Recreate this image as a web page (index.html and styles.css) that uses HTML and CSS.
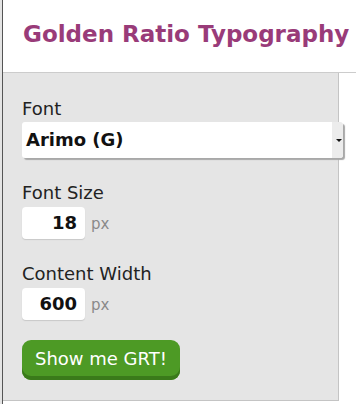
FILE: index.html
```html
<!DOCTYPE html>
<html lang="en">
<head>
    <meta charset="UTF-8">
    <title>Golden Ratio Typography</title>
    <link rel="stylesheet" href="styles.css">
</head>
<body>

    <div class="page">
        <div class="page-edge"></div>

        <!-- Fenêtre du popup -->
        <div class="popup">
            <div class="header">
                <h1>Golden Ratio Typography</h1>
            </div>

            <div class="panel">
                <div class="field">
                    <label>Font</label>
                    <div class="select">
                        <span class="select-value">Arimo (G)</span>
                        <span class="select-arrow"></span>
                    </div>
                </div>

                <div class="field">
                    <label>Font Size</label>
                    <div class="number-row">
                        <div class="number-input">18</div>
                        <span class="unit">px</span>
                    </div>
                </div>

                <div class="field">
                    <label>Content Width</label>
                    <div class="number-row">
                        <div class="number-input">600</div>
                        <span class="unit">px</span>
                    </div>
                </div>

                <button class="go-btn">Show me GRT!</button>
            </div>
        </div>
    </div>

</body>
</html>
```

FILE: styles.css
```css
body {
    margin: 0;
    background-color: #fff;
    font-family: "DejaVu Sans", sans-serif;
    color: #222;
    overflow: hidden;
}

.page {
    display: flex;
    height: 404px;
}

.page-edge {
    width: 2px;
    background-color: #e4e4e4;
    border-right: 1px solid #555;
}

.popup {
    flex: 1;
    display: flex;
    flex-direction: column;
    align-items: flex-start;
}

.header {
    align-self: stretch;
    height: 73px;
    border-bottom: 1px solid #ccc;
    padding-left: 20px;
    box-sizing: border-box;
}

h1 {
    margin: 0;
    padding-top: 20px;
    font-size: 23px;
    line-height: 28px;
    font-weight: bold;
    white-space: nowrap;
    color: #993b79;
}

.panel {
    width: 336px;
    height: 328px;
    box-sizing: border-box;
    background-color: #e5e5e5;
    border-right: 1px solid #c4c4c4;
    border-bottom: 1px solid #c4c4c4;
    padding: 26px 0 0 19px;
}

.field {
    margin-bottom: 25px;
}

label {
    display: block;
    font-size: 18px;
    line-height: 19px;
    margin-bottom: 4px;
}

.select {
    display: flex;
    width: 321px;
    height: 36px;
    background-color: #fff;
    border-radius: 3px;
    box-shadow: 2px 2px 1px #a8a8a8;
    overflow: hidden;
}

.select-value {
    flex: 1;
    padding-left: 4px;
    font-size: 18px;
    font-weight: bold;
    line-height: 36px;
    color: #111;
}

.select-arrow {
    width: 11px;
    background-color: #ececec;
    position: relative;
}

.select-arrow::after {
    content: "";
    position: absolute;
    left: 4px;
    top: 17px;
    border-left: 3px solid transparent;
    border-right: 3px solid transparent;
    border-top: 3px solid #111;
}

.number-row {
    display: flex;
    align-items: center;
    gap: 6px;
    padding-top: 1px;
}

.number-input {
    width: 63px;
    height: 32px;
    box-sizing: border-box;
    background-color: #fff;
    border-radius: 4px;
    box-shadow: 0 1px 1px #c8c8c8;
    text-align: right;
    padding-right: 8px;
    font-size: 18px;
    font-weight: bold;
    line-height: 32px;
    color: #111;
}

.unit {
    font-size: 15px;
    color: #8a8a8a;
    padding-top: 2px;
}

.go-btn {
    margin-top: -5px;
    width: 158px;
    height: 40px;
    border: none;
    border-radius: 9px;
    background-color: #4d9a25;
    box-shadow: inset 0 -4px 0 #3a7a1a;
    color: #fff;
    font-family: "DejaVu Sans", sans-serif;
    font-size: 18px;
    padding: 0 0 3px 0;
    cursor: pointer;
}
```
